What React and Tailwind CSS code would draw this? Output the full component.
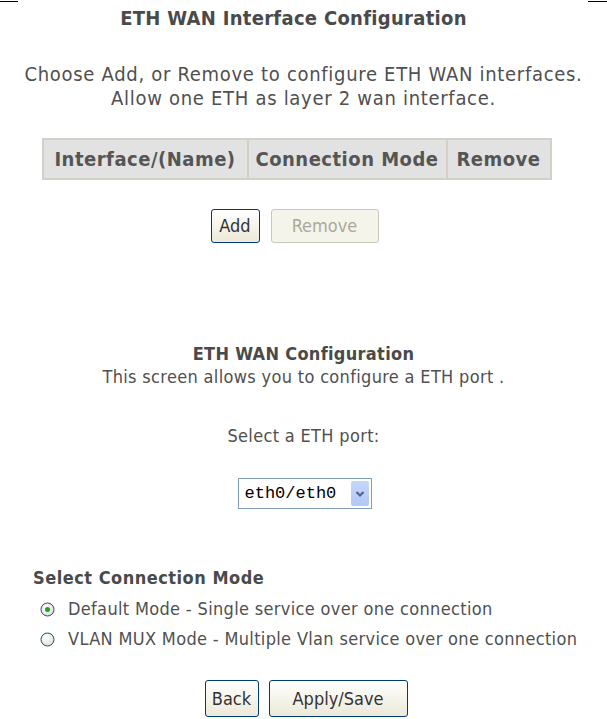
import { useState } from "react";

const font = "font-['Tahoma','DejaVu_Sans_Condensed','DejaVu_Sans',sans-serif]";

function XpButton({ children, disabled, className = "" }) {
  return (
    <button
      disabled={disabled}
      className={
        "rounded-[3px] border text-[18px] leading-none " +
        (disabled
          ? "border-[#c9c7ba] bg-[#f5f4ea] text-[#aca899] "
          : "border-[#003c74] bg-gradient-to-b from-white to-[#ece9d8] text-[#333] ") +
        className
      }
    >
      {children}
    </button>
  );
}

function Radio({ checked, onClick }) {
  return (
    <svg width="15" height="15" viewBox="0 0 15 15" onClick={onClick} className="shrink-0 cursor-pointer">
      <defs>
        <radialGradient id="rg" cx="40%" cy="35%" r="70%">
          <stop offset="0%" stopColor="#ffffff" />
          <stop offset="100%" stopColor="#dcdcd6" />
        </radialGradient>
      </defs>
      <circle cx="7.5" cy="7.5" r="6.5" fill="url(#rg)" stroke="#1c5180" strokeWidth="1" />
      {checked && <circle cx="7.5" cy="7.5" r="2.5" fill="#21a121" />}
    </svg>
  );
}

export default function App() {
  const [mode, setMode] = useState(0);

  return (
    <div className={"relative w-[607px] h-[719px] bg-white overflow-hidden text-[#505050] " + font}>
      <div className="absolute left-0 top-[1px] w-[18px] h-[1px] bg-black" />
      <div className="absolute right-0 top-[1px] w-[19px] h-[1px] bg-black" />

      <h1 className="pt-[7px] pr-[20px] text-center text-[20px] font-bold tracking-[0.3px] text-[#4a4a4a] leading-[22px]">
        ETH WAN Interface Configuration
      </h1>

      <div className="mt-[33px] text-center text-[20px] tracking-[0.7px] leading-[24px] whitespace-nowrap">
        <p>Choose Add, or Remove to configure ETH WAN interfaces.</p>
        <p>Allow one ETH as layer 2 wan interface.</p>
      </div>

      <div className="mt-[28px] flex justify-center pr-[14px]">
        <table className="border-collapse border-2 border-[#d4d0c8] bg-[#e2e2e2] text-[20px] font-bold tracking-[0.5px] text-[#555] whitespace-nowrap">
          <thead>
            <tr className="h-[40px]">
              <th className="w-[205px] border-r-2 border-[#d4d0c8] px-[2px] font-bold">Interface/(Name)</th>
              <th className="w-[199px] border-r-2 border-[#d4d0c8] px-[2px] font-bold">Connection Mode</th>
              <th className="w-[104px] px-[2px] font-bold">Remove</th>
            </tr>
          </thead>
        </table>
      </div>

      <div className="mt-[29px] flex justify-center gap-[11px] pr-[18px]">
        <XpButton className="h-[34px] w-[49px]">Add</XpButton>
        <XpButton disabled className="h-[34px] w-[108px]">Remove</XpButton>
      </div>

      <div className="mt-[100px] text-center">
        <h2 className="text-[18px] font-bold tracking-[0.3px] text-[#4a4a4a] leading-[22px]">ETH WAN Configuration</h2>
        <p className="text-[18px] tracking-[0.33px] leading-[24px]">This screen allows you to configure a ETH port .</p>
        <p className="mt-[35px] text-[18px] tracking-[0.33px] leading-[24px]">Select a ETH port:</p>
      </div>

      <div className="mt-[30px] flex justify-center pl-[2px]">
        <div className="flex h-[31px] w-[134px] items-center border border-[#7f9db9] bg-white pl-[6px] pr-[2px]">
          <span className="flex-1 font-['Liberation_Mono',monospace] text-[17px] text-black">eth0/eth0</span>
          <span className="flex h-[25px] w-[18px] items-center justify-center rounded-[2px] bg-gradient-to-b from-[#c6d6fb] to-[#b1c8f7]">
            <svg width="10" height="8" viewBox="0 0 10 8">
              <path d="M1.5 2 L5 5.5 L8.5 2" fill="none" stroke="#4d6185" strokeWidth="2" />
            </svg>
          </span>
        </div>
      </div>

      <div className="mt-[58px] pl-[33px]">
        <h3 className="text-[18px] font-bold tracking-[0.5px] text-[#4a4a4a] leading-[22px]">Select Connection Mode</h3>
        <div className="mt-[8px] flex flex-col gap-[6px] pl-[7px] text-[18px] tracking-[0.33px] leading-[24px]">
          <label className="flex items-center gap-[13px]">
            <Radio checked={mode === 0} onClick={() => setMode(0)} />
            <span>Default Mode - Single service over one connection</span>
          </label>
          <label className="flex items-center gap-[13px]">
            <Radio checked={mode === 1} onClick={() => setMode(1)} />
            <span>VLAN MUX Mode - Multiple Vlan service over one connection</span>
          </label>
        </div>
      </div>

      <div className="mt-[29px] flex justify-center gap-[10px] pl-[5px]">
        <XpButton className="h-[37px] w-[54px]">Back</XpButton>
        <XpButton className="h-[37px] w-[139px]">Apply/Save</XpButton>
      </div>
    </div>
  );
}
